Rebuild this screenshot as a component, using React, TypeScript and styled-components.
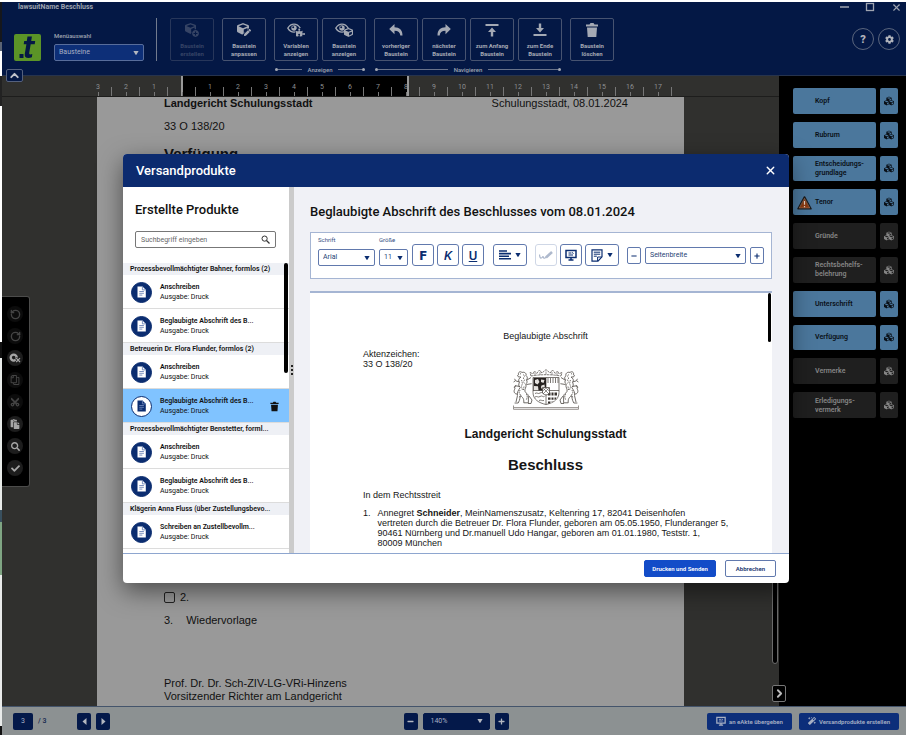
import React from 'react';
import styled, { createGlobalStyle, css } from 'styled-components';
import {
  FaCube, FaCubes, FaPuzzlePiece, FaPen, FaCog, FaRegCopy, FaCut, FaPaste,
  FaCheck, FaMagic, FaPlus, FaMinus, FaSearch, FaPlusCircle,
} from 'react-icons/fa';
import { RotateCcw, RotateCw, ChevronUp, ChevronRight, X } from 'lucide-react';

const UI = 'Roboto, "Liberation Sans", sans-serif';
const DOC = '"Liberation Sans", Arial, sans-serif';

const Global = createGlobalStyle`
  * { box-sizing: border-box; }
  html, body, #root { height: 100%; }
  body { margin: 0; overflow: hidden; font-family: ${UI}; font-size: 7px; background: #fff; }
  button, input, select { font-family: inherit; font-size: inherit; margin: 0; padding: 0; }
  h1, h2, h3, p, ul, ol { margin: 0; padding: 0; font-weight: inherit; list-style: none; }
  svg { display: block; flex: none; }
`;

/* ---------- window frame ---------- */
const Desktop = styled.div`
  height: 100vh;
  padding: 2px 0 0 2px;
  background: linear-gradient(#fff 2px, #15171c 2px 42px, #5b6474 42px 51px, #fff 51px 76px, #222 76px 106px,
    #fff 106px 342px, #111 342px 358px, #e8ebe9 358px 510px, #39505f 510px 522px, #7fa583 522px 575px, #e9ebea 575px 726px, #111 726px);
`;
const Frame = styled.div`
  position: relative;
  height: 100%;
  display: flex;
  flex-direction: column;
  background: #000;
`;

/* ---------- ribbon ---------- */
const Header = styled.header`
  height: 74px;
  flex: none;
  display: flex;
  flex-direction: column;
  background: #041845;
  color: #9fa4b0;
  border-bottom: 1px solid #26334d;
`;
const TitleBar = styled.div`
  height: 10px;
  display: flex;
  align-items: center;
  justify-content: space-between;
  padding: 0 4px 0 16px;
`;
const WindowTitle = styled.h1`
  font-size: 7px;
  line-height: 10px;
  font-weight: 700;
`;
const WindowButtons = styled.div`
  display: flex;
  gap: 16px;
`;
const PlainButton = styled.button`
  display: flex;
  align-items: center;
  justify-content: center;
  border: 0;
  background: none;
  color: inherit;
`;
const Ribbon = styled.div`
  flex: 1;
  display: flex;
  padding: 6px 6px 0 12px;
`;
const Logo = styled.div`
  margin: 16px 13px 0 0;
`;
const MenuChoice = styled.label`
  width: 90px;
  margin: 13px 12px 0 0;
  display: flex;
  flex-direction: column;
  gap: 4px;
  font-size: 6px;
  line-height: 9px;
  font-weight: 500;
`;
const Divider = styled.div`
  width: 1px;
  height: 43px;
  margin-right: 13px;
  background: #727b8e;
`;
const ToolGroups = styled.div`
  display: flex;
  gap: 8px;
`;
const ToolGroup = styled.div``;
const ToolRow = styled.div<{ $gap: number }>`
  display: flex;
  gap: ${p => p.$gap}px;
`;
const ToolButton = styled.button`
  width: 44px;
  height: 43px;
  display: flex;
  flex-direction: column;
  align-items: center;
  gap: 4px;
  padding-top: 3px;
  border: 1px solid #475370;
  border-radius: 2px;
  background: transparent;
  color: #a4a9b4;
  font-size: 6px;
  line-height: 8px;
  font-weight: 700;
  white-space: pre-line;
  &:disabled { color: #364465; border-color: #27365a; }
`;
const GroupCaption = styled.div`
  display: flex;
  align-items: center;
  gap: 6px;
  padding: 0 1px;
  height: 17px;
  font-weight: 500;
  font-size: 6px;
`;
const CaptionLine = styled.span<{ $end?: boolean }>`
  flex: 1;
  display: flex;
  align-items: center;
  flex-direction: ${p => (p.$end ? 'row-reverse' : 'row')};
  &::before { content: ''; width: 3px; height: 3px; border-radius: 50%; background: #a4a9b4; }
  &::after { content: ''; flex: 1; height: 1px; background: #69738a; }
`;
const RoundButtons = styled.div`
  display: flex;
  gap: 4px;
  margin: 10px 0 0 auto;
`;
const RoundButton = styled.button`
  width: 22px;
  height: 22px;
  display: flex;
  align-items: center;
  justify-content: center;
  border: 1px solid #5a657d;
  border-radius: 50%;
  background: transparent;
  color: #b0b3bb;
  font-size: 11px;
  font-weight: 900;
`;

/* ---------- drop-down ---------- */
const SelectBox = styled.span<{ $tone: 'ribbon' | 'light' | 'footer'; $w?: number }>`
  position: relative;
  display: flex;
  align-items: center;
  width: ${p => (p.$w ? `${p.$w}px` : '100%')};
  select {
    appearance: none;
    width: 100%;
    height: 17px;
    padding: 0 4px;
    font-size: 7px;
    line-height: 15px;
    border-radius: 2px;
    border: 1px solid #6179ad;
    background: #fff;
    color: #263f74;
    ${p => p.$tone === 'ribbon' && css`background: #0d2f78; border-color: #586d9b; color: #a7b0c4;`}
    ${p => p.$tone === 'footer' && css`background: #04194a; border-color: #04194a; color: #a7b0c4; padding: 0 7px;`}
  }
  svg {
    position: absolute;
    right: ${p => (p.$tone === 'footer' ? 7 : 5)}px;
    color: ${p => (p.$tone === 'light' ? '#0b2d70' : '#b3b7c0')};
    pointer-events: none;
  }
`;
const Caret = () => (
  <svg width="6" height="4" viewBox="0 0 6 4"><path d="M.4 0h5.2L3.6 3.4q-.6.7-1.2 0z" fill="currentColor" /></svg>
);
type SelectProps = { tone: 'ribbon' | 'light' | 'footer'; w?: number; options: string[]; label?: string };
const Select = ({ tone, w, options, label }: SelectProps) => (
  <SelectBox $tone={tone} $w={w}>
    <select aria-label={label}>{options.map(o => <option key={o}>{o}</option>)}</select>
    <Caret />
  </SelectBox>
);

/* ---------- work area ---------- */
const Work = styled.main`
  flex: 1;
  min-height: 0;
  display: flex;
`;
const Canvas = styled.section`
  position: relative;
  flex: 1;
  min-width: 0;
  display: flex;
  flex-direction: column;
  background: #30302e;
`;
const Ruler = styled.div`
  height: 21px;
  flex: none;
  display: flex;
  padding-left: 82px;
  border-bottom: 1px solid #1d1d1c;
  background: linear-gradient(90deg, #30302e 179px, #999 179px 181px, #000 181px 405px, #999 405px 407px, #30302e 407px);
`;
const RulerCell = styled.span`
  width: 28px;
  flex: none;
  display: flex;
  flex-direction: column;
  align-items: center;
  justify-content: flex-end;
  color: #8d8f92;
  font-size: 7px;
  line-height: 8px;
  background: linear-gradient(#777, #777) right bottom / 1px 9px no-repeat;
  &::after { content: ''; width: 1px; height: 4px; margin-top: 1px; background: #777; }
`;
const Page = styled.article`
  flex: 1;
  min-height: 0;
  margin: 0 95px;
  padding: 0 56px 3px 67px;
  display: flex;
  flex-direction: column;
  justify-content: space-between;
  background: #999;
  color: #111;
  font-family: ${DOC};
  font-size: 11px;
  line-height: 13px;
`;
const PageHead = styled.div`
  display: flex;
  justify-content: space-between;
`;
const Strong = styled.strong`
  font-weight: 700;
`;
const CaseNumber = styled.p`
  margin-top: 10px;
`;
const PageHeading = styled.h2`
  margin-top: 12px;
  font-size: 15px;
  line-height: 18px;
  font-weight: 700;
`;
const PageItem = styled.label<{ $gap: number }>`
  display: flex;
  align-items: center;
  gap: ${p => p.$gap}px;
  margin-bottom: 10px;
`;
const PageCheck = styled.input`
  appearance: none;
  width: 11px;
  height: 11px;
  margin: 0;
  border: 1px solid #222;
  border-radius: 2px;
`;
const Signature = styled.div`
  margin-top: 50px;
`;
const CanvasScroll = styled.div`
  position: absolute;
  right: 1px;
  bottom: 42px;
  width: 6px;
  height: 420px;
  border: 1px solid #6b6b6b;
  border-radius: 3px;
  background: #000;
`;
const PanelToggle = styled.button`
  position: absolute;
  right: -7px;
  bottom: 4px;
  width: 14px;
  height: 17px;
  display: flex;
  align-items: center;
  justify-content: center;
  border: 1px solid #777;
  border-radius: 2px;
  background: #000;
  color: #bbb;
  z-index: 1;
`;
const CollapseButton = styled.button`
  position: absolute;
  left: 4px;
  top: 67px;
  width: 17px;
  height: 13px;
  display: flex;
  align-items: center;
  justify-content: center;
  border: 1px solid #55617d;
  border-radius: 2px;
  background: #041845;
  color: #c0c3ca;
`;
const ToolDock = styled.nav`
  position: absolute;
  left: 0;
  top: 294px;
  width: 28px;
  padding: 9px 0 10px 5px;
  display: flex;
  flex-direction: column;
  gap: 6px;
  border: 1px solid #4c4c4b;
  border-left: 0;
  border-radius: 0 3px 3px 0;
  background: #000;
`;
const DockButton = styled.button`
  width: 16px;
  height: 16px;
  display: flex;
  align-items: center;
  justify-content: center;
  border: 0;
  border-radius: 50%;
  background: #1d1d1d;
  color: #a6a6a6;
  &:disabled { background: #0c0c0c; color: #444; }
`;
const Sidebar = styled.aside`
  width: 127px;
  flex: none;
  padding: 12px 8px 0 14px;
  background: #000;
`;
const SectionList = styled.ul`
  height: 330px;
  display: flex;
  flex-direction: column;
  gap: 8px;
`;
const SectionRow = styled.li`
  flex: 1;
  display: flex;
  gap: 4px;
`;
const SectionButton = styled.button<{ $on: boolean; $main?: boolean }>`
  display: flex;
  align-items: center;
  ${p => (p.$main ? css`flex: 1; gap: 3px; padding: 1px 0 0 4px;` : css`width: 18px; justify-content: center;`)}
  border: 0;
  border-radius: 2px;
  background: ${p => (p.$on ? '#4b779c' : '#1f1f1f')};
  color: ${p => (p.$on ? '#0a1017' : '#858585')};
  font-size: 7px;
  line-height: 9px;
  font-weight: 600;
  text-align: left;
  white-space: pre-line;
`;
const WarnSlot = styled.span`
  width: 15px;
  height: 14px;
`;

/* ---------- status bar ---------- */
const Footer = styled.footer`
  height: 29px;
  flex: none;
  display: grid;
  grid-template-columns: 1fr auto 1fr;
  align-items: center;
  padding: 0 7px 0 11px;
  border-top: 1px solid #44546b;
  background: #8c9192;
`;
const FooterPart = styled.div<{ $gap: number; $end?: boolean }>`
  display: flex;
  align-items: center;
  gap: ${p => p.$gap}px;
  justify-content: ${p => (p.$end ? 'flex-end' : 'flex-start')};
`;
const PageInput = styled.input`
  width: 20px;
  height: 17px;
  border: 0;
  border-radius: 2px;
  background: #04194a;
  color: #a7b0c4;
  text-align: center;
`;
const PageTotal = styled.span`
  margin-right: 26px;
  color: #14264d;
  font-weight: 500;
`;
const SquareButton = styled.button`
  width: 14px;
  height: 17px;
  display: flex;
  align-items: center;
  justify-content: center;
  border: 0;
  border-radius: 2px;
  background: #04194a;
  color: #b3b7c0;
`;
const ActionButton = styled.button`
  height: 17px;
  display: flex;
  align-items: center;
  gap: 3px;
  padding: 0 9px;
  border: 0;
  border-radius: 2px;
  background: #0c2e7a;
  color: #a7b0c4;
  font-size: 6px;
  font-weight: 600;
  white-space: nowrap;
`;

/* ---------- dialog ---------- */
const Overlay = styled.div`
  position: absolute;
  inset: 0;
  display: flex;
  padding: 152px 117px 152px 121px;
  pointer-events: none;
  z-index: 2;
`;
const Dialog = styled.div`
  flex: 1;
  min-width: 0;
  display: flex;
  flex-direction: column;
  border-radius: 4px;
  overflow: hidden;
  background: #fff;
  color: #111;
  box-shadow: 0 8px 24px rgba(0, 0, 0, 0.5);
  pointer-events: auto;
`;
const DialogHead = styled.div`
  height: 33px;
  flex: none;
  display: flex;
  align-items: center;
  justify-content: space-between;
  padding: 0 12px 0 13px;
  background: #0c2b6f;
  color: #fff;
`;
const DialogTitle = styled.h2`
  font-size: 13px;
  font-weight: 500;
`;
const DialogBody = styled.div`
  flex: 1;
  min-height: 0;
  display: flex;
`;
const Products = styled.div`
  width: 166px;
  flex: none;
  display: flex;
  flex-direction: column;
`;
const ProductsTitle = styled.h3`
  margin: 15px 12px 13px;
  font-size: 13px;
  line-height: 16px;
  font-weight: 500;
`;
const SearchBox = styled.label`
  height: 17px;
  margin: 0 13px 15px 12px;
  display: flex;
  align-items: center;
  padding: 0 5px;
  border: 1px solid #777;
  border-radius: 2px;
  color: #333;
  input {
    flex: 1;
    min-width: 0;
    border: 0;
    outline: 0;
    background: none;
    &::placeholder { color: #666; opacity: 1; }
  }
`;
const ListViewport = styled.div`
  position: relative;
  flex: 1;
  min-height: 0;
  overflow: hidden;
`;
const ScrollThumb = styled.div<{ $h: number; $w: number }>`
  position: absolute;
  right: 1px;
  top: 0;
  width: ${p => p.$w}px;
  height: ${p => p.$h}px;
  border-radius: 2px;
  background: #000;
`;
const GroupHead = styled.h3`
  height: 12px;
  padding: 0 7px;
  background: #eef0f5;
  font-size: 7px;
  line-height: 12px;
  font-weight: 600;
  white-space: nowrap;
`;
const Product = styled.li<{ $active?: boolean }>`
  height: 34px;
  display: flex;
  align-items: center;
  padding: 1px 9px 0 8px;
  border-bottom: 1px solid #dcdcdc;
  background: ${p => (p.$active ? '#80c3ff' : '#fff')};
  line-height: 10px;
`;
const ProductIcon = styled.span<{ $active?: boolean }>`
  width: 21px;
  height: 21px;
  margin-right: 8px;
  display: flex;
  align-items: center;
  justify-content: center;
  border-radius: 50%;
  border: 1px solid #0b2d70;
  background: ${p => (p.$active ? '#fff' : '#0b2d70')};
  color: ${p => (p.$active ? '#0b2d70' : '#fff')};
`;
const ProductText = styled.div`
  flex: 1;
  white-space: nowrap;
`;
const ProductName = styled.p`
  font-weight: 600;
`;
const Splitter = styled.div`
  width: 5px;
  flex: none;
  display: flex;
  flex-direction: column;
  align-items: center;
  justify-content: center;
  gap: 2px;
  background: #cbcbcb;
  span { width: 2px; height: 2px; background: #222; }
`;
const Preview = styled.div`
  flex: 1;
  min-width: 0;
  display: flex;
  flex-direction: column;
  padding: 0 17px 0 16px;
  background: #f0f1f6;
`;
const PreviewTitle = styled.h3`
  margin: 17px 0 12px;
  font-size: 13px;
  line-height: 16px;
  font-weight: 500;
  white-space: nowrap;
`;
const Toolbar = styled.div`
  height: 47px;
  flex: none;
  display: flex;
  align-items: flex-end;
  gap: 4px;
  padding: 0 7px 12px;
  margin-bottom: 12px;
  border: 1px solid #a5b5d3;
  background: #fff;
`;
const ToolField = styled.label`
  display: flex;
  flex-direction: column;
  gap: 5px;
  font-size: 6px;
  line-height: 8px;
  color: #354e83;
`;
const FormatButton = styled.button<{ $wide?: boolean }>`
  width: ${p => (p.$wide ? 34 : 22)}px;
  height: 22px;
  display: flex;
  align-items: center;
  justify-content: center;
  gap: 4px;
  border: 1px solid #6179ad;
  border-radius: 3px;
  background: #fff;
  color: #0b2d70;
  font-size: 13px;
  font-weight: 500;
  b { font-weight: 900; }
  &:disabled { border-color: #cfd7e6; color: #aeb9cd; }
`;
const ToolCluster = styled.div<{ $m?: number }>`
  display: flex;
  gap: 3px;
  margin-left: ${p => p.$m ?? 0}px;
`;
const ZoomCluster = styled(ToolCluster)`
  flex: 1;
  min-width: 0;
  gap: 4px;
  margin-bottom: 2px;
`;
const ZoomButton = styled.button`
  width: 14px;
  height: 17px;
  flex: none;
  display: flex;
  align-items: center;
  justify-content: center;
  border: 1px solid #6179ad;
  border-radius: 2px;
  background: #fff;
  color: #0b2d70;
`;
const Sheet = styled.article`
  position: relative;
  flex: 1;
  min-height: 0;
  overflow: hidden;
  padding: 38px 44px 0 53px;
  border-top: 2px solid #a5b5d3;
  background: #fff;
  color: #151515;
  font-family: ${DOC};
  font-size: 9px;
  line-height: 10px;
`;
const Centered = styled.p`
  text-align: center;
`;
const FileRef = styled.p`
  margin: 8px 0 0;
`;
const Crest = styled.div`
  display: flex;
  justify-content: center;
`;
const CourtName = styled.h3`
  margin-top: 16px;
  text-align: center;
  font-size: 12px;
  line-height: 16px;
  font-weight: 700;
`;
const Decision = styled.h2`
  margin-top: 14px;
  text-align: center;
  font-size: 15px;
  line-height: 18px;
  font-weight: 700;
`;
const Intro = styled.p`
  margin: 16px 0 8px;
`;
const Party = styled.div`
  display: flex;
  gap: 7px;
  white-space: nowrap;
`;
const DialogFoot = styled.div`
  height: 30px;
  flex: none;
  display: flex;
  align-items: center;
  justify-content: flex-end;
  gap: 9px;
  padding: 0 13px;
  border-top: 1px solid #8ea6cf;
`;
const FootButton = styled.button<{ $primary?: boolean }>`
  height: 17px;
  padding: 0 ${p => (p.$primary ? 7 : 10)}px;
  border: 1px solid ${p => (p.$primary ? '#134cc8' : '#6179ad')};
  border-radius: 2px;
  background: ${p => (p.$primary ? '#134cc8' : '#fff')};
  color: ${p => (p.$primary ? '#fff' : '#17346f')};
  font-size: 6px;
  font-weight: 600;
`;

/* ---------- drawings ---------- */
const LogoMark = () => (
  <svg width="27" height="27" viewBox="0 0 27 27">
    <rect width="27" height="27" rx="2" fill="#5b9427" />
    <path d="M13.500 2.600h4.400L17.200 7h4l-.5 3.200h-4l-1.500 8.500c-.2 1.300.3 1.700 1.100 1.700.7 0 1.400-.2 2-.5l-.4 3.300c-1.100.6-2.300.8-3.500.8-2.800 0-4.100-1.600-3.600-4.300l1.600-9.500h-2.700L10.200 7h2.600z" fill="#041845" />
    <rect x="5.500" y="20" width="4" height="4" fill="#041845" />
  </svg>
);
const CubePlus = () => (
  <svg width="16" height="16" viewBox="0 0 16 16"><FaCube x={1} y={1} size={11} /><circle cx="11.500" cy="11.500" r="4.300" fill="#041845" /><FaPlusCircle x={8} y={8} size={7} /></svg>
);
const CubePen = () => (
  <svg width="16" height="16" viewBox="0 0 16 16"><FaCube x={1} y={1} size={12} /><path d="M7 15l8-8" stroke="#041845" strokeWidth="4" /><FaPen x={8} y={7} size={7} /></svg>
);
const Eye = () => (
  <g>
    <path d="M.8 6.200C2.500 3.300 4.800 2.200 7 2.200s4.500 1.100 6.200 4C11.500 9.100 9.200 10.200 7 10.200S2.500 9.100.8 6.200z" fill="none" stroke="currentColor" strokeWidth="1.300" />
    <circle cx="7" cy="6" r="2.700" fill="currentColor" />
    <circle cx="6.200" cy="5.200" r="1" fill="#041845" />
  </g>
);
const EyePuzzle = () => (
  <svg width="18" height="16" viewBox="0 0 18 16"><Eye /><circle cx="13" cy="10.500" r="4.600" fill="#041845" /><FaPuzzlePiece x={9} y={6} size={9} /></svg>
);
const EyeCube = () => (
  <svg width="18" height="16" viewBox="0 0 18 16"><Eye /><circle cx="13.500" cy="10.500" r="4.600" fill="#041845" /><FaCube x={9} y={6} size={9} /></svg>
);
const ArrowBack = ({ flip }: { flip?: boolean }) => (
  <svg width="16" height="16" viewBox="0 0 16 16">
    <path transform={flip ? 'matrix(-1 0 0 1 16 0)' : undefined} d="M6.500 2v3.300c5 .2 8 2.600 8 8.200h-2.200c-.2-3-2-4.600-5.800-4.700v3.400L1.200 7z" fill="currentColor" />
  </svg>
);
const ToTop = () => (
  <svg width="16" height="16" viewBox="0 0 16 16"><path d="M1.500 2h13v2h-13zM8 5.500l4 4.500H9.200v4.500H6.800V10H4z" fill="currentColor" /></svg>
);
const ToEnd = () => (
  <svg width="16" height="16" viewBox="0 0 16 16"><path d="M1.500 12h13v2h-13zM8 10.500L4 6h2.800V1.500h2.400V6H12z" fill="currentColor" /></svg>
);
const Bin = ({ s }: { s: number }) => (
  <svg width={s} height={s} viewBox="0 0 16 16"><path d="M2 2.500h3.500L6.500 1h3l1 1.500H14v2H2zM3 5.500h10l-.7 9.500H3.700z" fill="currentColor" /></svg>
);
const DocIcon = () => (
  <svg width="11" height="12" viewBox="0 0 11 12">
    <path d="M1.500.5H6.500L9.800 3.800V11.500H1.500z" fill="currentColor" />
    <path d="M6.400.7v3.200h3.200M3.300 5.500h4.600M3.300 7.300h4.600M3.300 9.100h3" fill="none" stroke="#6d86b8" strokeWidth=".9" />
  </svg>
);
const Warning = () => (
  <svg width="15" height="14" viewBox="0 0 15 14">
    <path d="M7.500 1L14 12.800H1z" fill="#8a3a12" stroke="#1b1a1a" strokeWidth="1.600" strokeLinejoin="round" />
    <path d="M7.500 2.300L12.800 12H2.200z" fill="none" stroke="#b98b70" strokeWidth=".5" />
    <path d="M7.500 5v3.800M7.500 10v1.200" stroke="#e0d0c4" strokeWidth="1.200" />
  </svg>
);
const ScreenIcon = ({ s = 12 }: { s?: number }) => (
  <svg width={s} height={s} viewBox="0 0 12 12">
    <path d="M1 1.500h10v7H1zM3.500 11h5M6 8.500V11" fill="none" stroke="currentColor" strokeWidth="1.500" />
    <path d="M3.500 4h3M3.500 6h4.500M7 3.500l1.500 1" stroke="currentColor" strokeWidth="1" />
  </svg>
);
const NoteIcon = () => (
  <svg width="12" height="13" viewBox="0 0 12 13">
    <path d="M1 .8h10v7L7 12.200H1z" fill="none" stroke="currentColor" strokeWidth="1.200" />
    <path d="M2.800 3.200h6.400M2.800 5.200h6.400M2.800 7.200h3M6.600 12V8h4.200" fill="none" stroke="currentColor" strokeWidth="1" />
  </svg>
);
const AlignIcon = () => (
  <svg width="12" height="10" viewBox="0 0 12 10"><path d="M0 1h8M0 3.600h12M0 6.200h10M0 8.800h12" stroke="currentColor" strokeWidth="1.600" /></svg>
);
const PenIcon = () => (
  <svg width="14" height="10" viewBox="0 0 14 10">
    <path d="M.5 4.500q.3 4 1.800 3.500T4 6q.5 3 2 2t1.500-1.500" fill="none" stroke="currentColor" strokeWidth="1.200" />
    <path d="M7 7.500l6-5.500" stroke="currentColor" strokeWidth="2.600" />
  </svg>
);
const DiscX = () => (
  <svg width="12" height="10" viewBox="0 0 12 10">
    <circle cx="4.700" cy="4.600" r="3" fill="none" stroke="currentColor" strokeWidth="2.400" />
    <path d="M7 5l4.300 4.300M11.300 5L7 9.300" stroke="#1d1d1d" strokeWidth="2.600" />
    <path d="M7.200 5.200l3.800 3.800M11 5.200L7.200 9" stroke="currentColor" strokeWidth="1.200" />
  </svg>
);
const Triangle = ({ flip }: { flip?: boolean }) => (
  <svg width="5" height="7" viewBox="0 0 5 7"><path d={flip ? 'M.5 0v7L4.500 3.500z' : 'M4.500 0v7L.5 3.500z'} fill="currentColor" /></svg>
);

const Lion = () => (
  <g fill="none" stroke="#4c4743" strokeWidth=".8">
    <path d="M9 3.500c-2-1.800-4.200 0-3.400 2-1.400.3-1.200 2.200.2 2.400l2 .1M7 4.800h1M9 3.500c2.500-1 4.800 1 4 3.200 1.600 1 1.800 3 .4 4.300 1.200 1.600.6 3.400-.8 4" />
    <path d="M8 8c-2.400 1.600-3 3.400-1.600 5.400-1.200 2.200-.6 4 .8 5.200-1.600 2.400-3.400 4.500-2.800 8.200M13 15c.6 4-1.800 5-1 7.400.6 2 3.200 2 3.400 4.900v6.500h-4.600c.4-5.600-2.400-5.600-3-7.300-1.200 1.600-.4 3.700-2.600 7.500H1.600" />
    <path d="M6.400 13l-3.800-1.200-1-2M2 12l-1.400 1M7 17.500l-3.800-.6-1.600 1.800M14 11l4-2.500M13.600 15.500l5-.8M4.400 27L3 33M4.600 25c-3.400.4-4.400-3-2.600-5.200M2 19.800c-1.400-1.400-.4-3.600 1.200-3.400M16 27l3 4-1 3.500h-3" />
    <path d="M10.500 5.500l1 2-1.400 1.600 1.600 1.700-1.300 2 1.400 2M8.600 11l.8 3.500-1 3 1.200 4M11 17.500l-.6 3.500M7 21l-1 3 1.500 2-1.500 3M13.500 25l.8 3-1 3" strokeDasharray="1.400 .8" />
  </g>
);
const CoatOfArms = () => (
  <svg width="66" height="41" viewBox="0 0 66 41">
    <Lion />
    <g transform="matrix(-1 0 0 1 66 0)"><Lion /></g>
    <g fill="none" stroke="#5b5651" strokeWidth=".8">
      <path d="M18 7l-1-3.500 3 1.300L21.500 2l2.200 2.400L26.500 1l2.400 3L33 .6 37.100 4l2.400-3 2.800 3.400L44.500 2 46 4.800l3-1.300L48 7M18 7q15-2.600 30 0" strokeDasharray="2.500 .7" />
      <path d="M22 3.500v3M27 3v3M33 2.500V5.500M39 3v3M44 3.500v3" strokeWidth=".6" />
      <path d="M20 8.500h26v15c0 7-6 10.500-13 12-7-1.500-13-5-13-12z" />
      <path d="M33 8.500v27M20 21.500h26M35 9v5M37.500 9v5M40 9v5M42.500 9v5M45 9v5" />
      <path d="M22 24.500c2-1.500 3 1 5-.5s3 1 4.500 0M22 28c2-1.500 3 1 5-.5s3 1 4.500 0M26 31.500c2-1 3 .6 5 0" />
    </g>
    <path d="M20.500 9H33v12.500H20.500z" fill="#25211f" />
    <path d="M22 11l3-1 1.500 3-2 2.500L22 14zM28 10.500l3.500.6-1 3-2.500-1zM21 17l4 .2.5 4H21zM28.500 16.500l3-1 .4 4-3 .6-1-1.800z" fill="#e5e2df" />
    <path d="M35 23.500h9v3h-9zM35 28.500h8.500l-1 2.300H35zM35 32.500h5l-4 2h-1z" fill="#38332f" />
    <path d="M38 22v12M41 22v10" stroke="#fff" strokeWidth="1" />
    <path d="M29.500 18.500h7v5.500q-3.500 4-7 0z" fill="#fff" stroke="#4c4743" strokeWidth=".8" />
    <path d="M30 19l6 6M33 18.800l3.300 3.300M36 19l-6 6M33 18.800l-3.300 3.300" stroke="#4c4743" strokeWidth=".6" />
    <path d="M.5 36.500v3.800h65v-3.800M1 38.600h64" fill="none" stroke="#8b8782" strokeWidth=".9" />
  </svg>
);

/* ---------- data ---------- */
const sections = [
  { name: 'Kopf', on: true }, { name: 'Rubrum', on: true }, { name: 'Entscheidungs-\ngrundlage', on: true },
  { name: 'Tenor', on: true, warn: true }, { name: 'Gründe', on: false }, { name: 'Rechtsbehelfs-\nbelehrung', on: false },
  { name: 'Unterschrift', on: true }, { name: 'Verfügung', on: true }, { name: 'Vermerke', on: false },
  { name: 'Erledigungs-\nvermerk', on: false },
];
const products = [
  { head: 'Prozessbevollmächtigter Bahner, formlos (2)', items: ['Anschreiben', 'Beglaubigte Abschrift des B...'] },
  { head: 'Betreuerin Dr. Flora Flunder, formlos (2)', items: ['Anschreiben', 'Beglaubigte Abschrift des B...'], active: 1 },
  { head: 'Prozessbevollmächtigter Benstetter, forml...', items: ['Anschreiben', 'Beglaubigte Abschrift des B...'] },
  { head: 'Klägerin Anna Fluss (über Zustellungsbevo...', items: ['Schreiben an Zustellbevollm...'] },
];
const rulerMarks = ['3', '2', '1', '', ...Array.from({ length: 17 }, (_, i) => String(i + 1))];
const tool = (label: string, icon: React.ReactNode, disabled = false) => (
  <ToolButton key={label} disabled={disabled}>{icon}{label}</ToolButton>
);

export default function App() {
  return (
    <Desktop>
      <Global />
      <Frame>
        <Header>
          <TitleBar>
            <WindowTitle>lawsuitName Beschluss</WindowTitle>
            <WindowButtons>
              <PlainButton aria-label="Minimieren"><svg width="10" height="10"><path d="M1 5h9" stroke="currentColor" strokeWidth="1.500" /></svg></PlainButton>
              <PlainButton aria-label="Maximieren"><svg width="10" height="10"><rect x="1.500" y="1.500" width="7" height="7" fill="none" stroke="currentColor" strokeWidth="1.300" /></svg></PlainButton>
              <PlainButton aria-label="Fenster schließen"><X size={11} strokeWidth={2.500} /></PlainButton>
            </WindowButtons>
          </TitleBar>
          <Ribbon>
            <Logo><LogoMark /></Logo>
            <MenuChoice>Menüauswahl<Select tone="ribbon" options={['Bausteine']} /></MenuChoice>
            <Divider />
            <ToolGroups>
              <ToolRow $gap={8}>
                {tool('Baustein\nerstellen', <CubePlus />, true)}
                {tool('Baustein\nanpassen', <CubePen />)}
              </ToolRow>
              <ToolGroup>
                <ToolRow $gap={4}>
                  {tool('Variablen\nanzeigen', <EyePuzzle />)}
                  {tool('Baustein\nanzeigen', <EyeCube />)}
                </ToolRow>
                <GroupCaption><CaptionLine />Anzeigen<CaptionLine $end /></GroupCaption>
              </ToolGroup>
              <ToolGroup>
                <ToolRow $gap={4}>
                  {tool('vorheriger\nBaustein', <ArrowBack />)}
                  {tool('nächster\nBaustein', <ArrowBack flip />)}
                  {tool('zum Anfang\nBaustein', <ToTop />)}
                  {tool('zum Ende\nBaustein', <ToEnd />)}
                </ToolRow>
                <GroupCaption><CaptionLine />Navigieren<CaptionLine $end /></GroupCaption>
              </ToolGroup>
              <ToolRow $gap={8}>{tool('Baustein\nlöschen', <Bin s={16} />)}</ToolRow>
            </ToolGroups>
            <RoundButtons>
              <RoundButton aria-label="Hilfe">?</RoundButton>
              <RoundButton aria-label="Einstellungen"><FaCog size={9} /></RoundButton>
            </RoundButtons>
          </Ribbon>
        </Header>

        <Work>
          <Canvas>
            <Ruler>{rulerMarks.map((m, i) => <RulerCell key={i}>{m}</RulerCell>)}</Ruler>
            <Page>
              <div>
                <PageHead><Strong>Landgericht Schulungsstadt</Strong><span>Schulungsstadt, 08.01.2024</span></PageHead>
                <CaseNumber>33 O 138/20</CaseNumber>
                <PageHeading>Verfügung</PageHeading>
              </div>
              <div>
                <PageItem $gap={5}><PageCheck type="checkbox" />2.</PageItem>
                <PageItem as="p" $gap={13}><span>3.</span>Wiedervorlage</PageItem>
                <Signature><p>Prof. Dr. Dr. Sch-ZIV-LG-VRi-Hinzens</p><p>Vorsitzender Richter am Landgericht</p></Signature>
              </div>
            </Page>
            <CanvasScroll />
            <PanelToggle aria-label="Leiste einklappen"><ChevronRight size={13} strokeWidth={3.5} /></PanelToggle>
          </Canvas>
          <Sidebar>
            <SectionList>
              {sections.map(s => (
                <SectionRow key={s.name}>
                  <SectionButton $main $on={s.on}><WarnSlot>{s.warn && <Warning />}</WarnSlot>{s.name}</SectionButton>
                  <SectionButton $on={s.on} aria-label={`Bausteine ${s.name}`}><FaCubes size={10} /></SectionButton>
                </SectionRow>
              ))}
            </SectionList>
          </Sidebar>
        </Work>

        <Footer>
          <FooterPart $gap={5}>
            <PageInput defaultValue="3" aria-label="Seite" />
            <PageTotal>/ 3</PageTotal>
            <SquareButton aria-label="Vorherige Seite"><Triangle /></SquareButton>
            <SquareButton aria-label="Nächste Seite"><Triangle flip /></SquareButton>
          </FooterPart>
          <FooterPart $gap={5}>
            <SquareButton aria-label="Verkleinern"><FaMinus size={7} /></SquareButton>
            <Select tone="footer" w={67} options={['140%']} label="Zoom" />
            <SquareButton aria-label="Vergrößern"><FaPlus size={7} /></SquareButton>
          </FooterPart>
          <FooterPart $gap={7} $end>
            <ActionButton><ScreenIcon s={10} />an eAkte übergeben</ActionButton>
            <ActionButton><FaMagic size={8} />Versandprodukte erstellen</ActionButton>
          </FooterPart>
        </Footer>

        <CollapseButton aria-label="Menüband einklappen"><ChevronUp size={13} strokeWidth={3.5} /></CollapseButton>
        <ToolDock>
          <DockButton disabled aria-label="Rückgängig"><RotateCcw size={11} strokeWidth={3} /></DockButton>
          <DockButton disabled aria-label="Wiederholen"><RotateCw size={11} strokeWidth={3} /></DockButton>
          <DockButton aria-label="Markierung entfernen"><DiscX /></DockButton>
          <DockButton disabled aria-label="Kopieren"><svg width="10" height="10"><g transform="matrix(-1 0 0 1 10 0)"><FaRegCopy size={10} /></g></svg></DockButton>
          <DockButton disabled aria-label="Ausschneiden"><svg width="10" height="10"><g transform="rotate(-90 5 5)"><FaCut size={10} /></g></svg></DockButton>
          <DockButton aria-label="Einfügen"><FaPaste size={10} /></DockButton>
          <DockButton aria-label="Suchen"><FaSearch size={9} /></DockButton>
          <DockButton aria-label="Prüfen"><FaCheck size={9} /></DockButton>
        </ToolDock>

        <Overlay>
          <Dialog role="dialog" aria-label="Versandprodukte">
            <DialogHead>
              <DialogTitle>Versandprodukte</DialogTitle>
              <PlainButton aria-label="Schließen"><X size={13} strokeWidth={2.500} /></PlainButton>
            </DialogHead>
            <DialogBody>
              <Products>
                <ProductsTitle>Erstellte Produkte</ProductsTitle>
                <SearchBox><input placeholder="Suchbegriff eingeben" aria-label="Suchbegriff eingeben" /><svg width="9" height="9" viewBox="0 0 9 9"><circle cx="3.600" cy="3.600" r="2.600" fill="none" stroke="currentColor" /><path d="M5.500 5.500l3 3" stroke="currentColor" strokeWidth="1.300" /></svg></SearchBox>
                <ListViewport>
                  {products.map(g => (
                    <section key={g.head}>
                      <GroupHead>{g.head}</GroupHead>
                      <ul>
                        {g.items.map((name, i) => {
                          const active = g.active === i;
                          return (
                            <Product key={name} $active={active}>
                              <ProductIcon $active={active}><DocIcon /></ProductIcon>
                              <ProductText><ProductName>{name}</ProductName><p>Ausgabe: Druck</p></ProductText>
                              {active && <PlainButton aria-label="Löschen"><Bin s={11} /></PlainButton>}
                            </Product>
                          );
                        })}
                      </ul>
                    </section>
                  ))}
                  <ScrollThumb $h={110} $w={4} />
                </ListViewport>
              </Products>
              <Splitter><span /><span /><span /></Splitter>
              <Preview>
                <PreviewTitle>Beglaubigte Abschrift des Beschlusses vom 08.01.2024</PreviewTitle>
                <Toolbar>
                  <ToolField>Schrift<Select tone="light" w={57} options={['Arial']} /></ToolField>
                  <ToolField>Größe<Select tone="light" w={29} options={['11']} /></ToolField>
                  <ToolCluster>
                    <FormatButton aria-label="Fett"><b>F</b></FormatButton>
                    <FormatButton aria-label="Kursiv"><i>K</i></FormatButton>
                    <FormatButton aria-label="Unterstrichen"><u>U</u></FormatButton>
                  </ToolCluster>
                  <ToolCluster $m={5}><FormatButton $wide aria-label="Ausrichtung"><AlignIcon /><Caret /></FormatButton></ToolCluster>
                  <ToolCluster $m={4}>
                    <FormatButton disabled aria-label="Signieren"><PenIcon /></FormatButton>
                    <FormatButton aria-label="Bildschirm"><ScreenIcon /></FormatButton>
                    <FormatButton $wide aria-label="Notiz"><NoteIcon /><Caret /></FormatButton>
                  </ToolCluster>
                  <ZoomCluster $m={4}>
                    <ZoomButton aria-label="Verkleinern"><FaMinus size={6} /></ZoomButton>
                    <Select tone="light" options={['Seitenbreite']} label="Ansicht" />
                    <ZoomButton aria-label="Vergrößern"><FaPlus size={6} /></ZoomButton>
                  </ZoomCluster>
                </Toolbar>
                <Sheet>
                  <Centered>Beglaubigte Abschrift</Centered>
                  <FileRef>Aktenzeichen:<br />33 O 138/20</FileRef>
                  <Crest><CoatOfArms /></Crest>
                  <CourtName>Landgericht Schulungsstadt</CourtName>
                  <Decision>Beschluss</Decision>
                  <Intro>In dem Rechtsstreit</Intro>
                  <Party>
                    <span>1.</span>
                    <p>Annegret <Strong>Schneider</Strong>, MeinNamenszusatz, Keltenring 17, 82041 Deisenhofen<br />
                      vertreten durch die Betreuer Dr. Flora Flunder, geboren am 05.05.1950, Flunderanger 5,<br />
                      90461 Nürnberg und Dr.manuell Udo Hangar, geboren am 01.01.1980, Teststr. 1,<br />
                      80009 München</p>
                  </Party>
                  <ScrollThumb $h={49} $w={3} />
                </Sheet>
              </Preview>
            </DialogBody>
            <DialogFoot>
              <FootButton $primary>Drucken und Senden</FootButton>
              <FootButton>Abbrechen</FootButton>
            </DialogFoot>
          </Dialog>
        </Overlay>
      </Frame>
    </Desktop>
  );
}
